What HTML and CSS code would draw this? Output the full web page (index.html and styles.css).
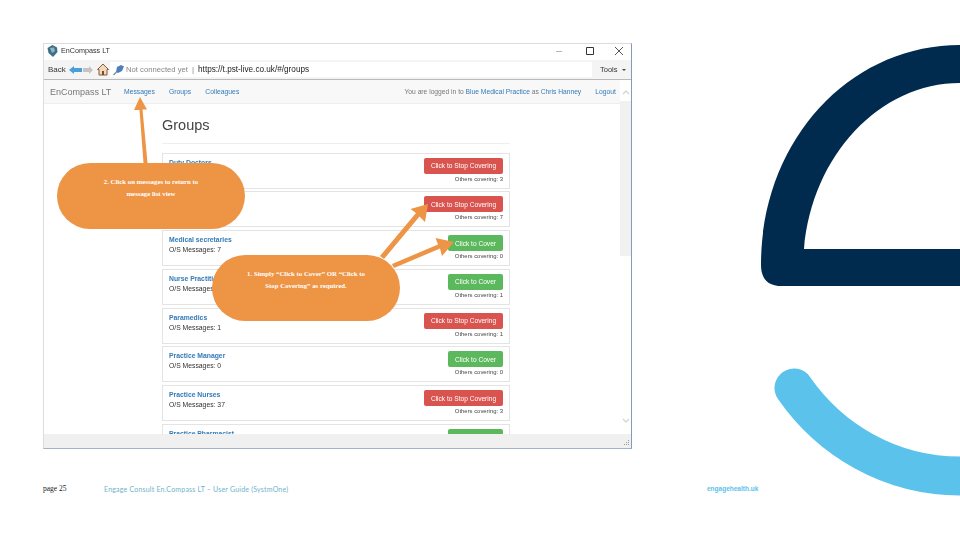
FILE: index.html
```html
<!DOCTYPE html>
<html lang="en">
<head>
    <meta charset="UTF-8">
    <meta name="viewport" content="width=device-width, initial-scale=1.0">
    <title>EnCompass LT - Groups</title>
    <link rel="stylesheet" href="styles.css">
</head>
<body>
    <div class="slide">
        <!-- brand shape on the right of the slide -->
        <svg class="brand" width="960" height="540" viewBox="0 0 960 540">
            <path fill="#002b4e" d="M960 45C850 45 761 140 761 265Q761 286 782 286H960V249H804C812 155 880 83 960 83Z"/>
            <path fill="none" stroke="#5bc2ec" stroke-width="39" stroke-linecap="round" d="M794 388C830 440 890 476 960 476"/>
        </svg>

        <div class="window">
            <div class="titlebar">
                <div class="app-name">
                    <svg width="11" height="12" viewBox="0 0 11 12"><path fill="#3f6f86" d="M5.500 0 10 2.500 10.500 7 6 12 1.500 8 .5 3Z"/><path fill="#8fb6c4" d="M3 3 7 2.500 8 6 5 8Z"/></svg>
                    <span>EnCompass LT</span>
                </div>
                <div class="win-controls">
                    <svg width="10" height="10" viewBox="0 0 10 10"><path stroke="#b5b5b5" d="M0 5.500H6"/></svg>
                    <svg width="10" height="10" viewBox="0 0 10 10"><path fill="none" stroke="#333" d="M1.500 1.500H8.500V8.500H1.500Z"/></svg>
                    <svg width="10" height="10" viewBox="0 0 10 10"><path stroke="#555" d="M1 1 9 9M9 1 1 9"/></svg>
                </div>
            </div>

            <div class="toolbar">
                <div class="nav-buttons">
                    <span class="back">Back</span>
                    <svg width="13" height="8" viewBox="0 0 13 8"><path fill="#4a9fd8" d="M0 4 5 0V2H13V6H5V8Z"/></svg>
                    <svg width="10" height="8" viewBox="0 0 10 8"><path fill="#c4c4c4" d="M10 4 6 0V2H0V6H6V8Z"/></svg>
                    <svg class="home" width="12" height="13" viewBox="0 0 12 13"><path fill="#efd9bd" stroke="#8a5a3a" d="M6 1 11.500 6.500H10V12H2V6.500H.5Z"/><path fill="#7a4a2a" d="M5 8H7V12H5Z"/></svg>
                </div>
                <div class="address">
                    <svg class="plug" width="12" height="12" viewBox="0 0 12 12"><path fill="#4f7fb8" d="M4 3 8 1 11 2.500 9 7 5 9 3 8Z"/><path stroke="#7c8ea5" stroke-width="1.500" d="M3.500 8 .5 11"/></svg>
                    <span class="status-text">Not connected yet</span>
                    <span class="sep">|</span>
                    <span class="url">https://t.pst-live.co.uk/#/groups</span>
                </div>
                <span class="tools">Tools <i class="caret"></i></span>
            </div>

            <div class="view">
                <div class="page">
                    <nav class="nav">
                        <span class="brand-name">EnCompass LT</span>
                        <a class="nav-link">Messages</a>
                        <a class="nav-link">Groups</a>
                        <a class="nav-link">Colleagues</a>
                        <span class="login-info">You are logged in to <a>Blue Medical Practice</a> as <a>Chris Hanney</a></span>
                        <a class="nav-link logout">Logout</a>
                    </nav>
                    <div class="content">
                        <h1>Groups</h1>
                        <div class="card">
                            <div><a class="group-name">Duty Doctors</a></div>
                            <div class="actions"><button class="btn stop">Click to Stop Covering</button><small>Others covering: 3</small></div>
                        </div>
                        <div class="card">
                            <div></div>
                            <div class="actions"><button class="btn stop">Click to Stop Covering</button><small>Others covering: 7</small></div>
                        </div>
                        <div class="card">
                            <div><a class="group-name">Medical secretaries</a><p>O/S Messages: 7</p></div>
                            <div class="actions"><button class="btn cover">Click to Cover</button><small>Others covering: 0</small></div>
                        </div>
                        <div class="card">
                            <div><a class="group-name">Nurse Practitioners</a><p>O/S Messages</p></div>
                            <div class="actions"><button class="btn cover">Click to Cover</button><small>Others covering: 1</small></div>
                        </div>
                        <div class="card">
                            <div><a class="group-name">Paramedics</a><p>O/S Messages: 1</p></div>
                            <div class="actions"><button class="btn stop">Click to Stop Covering</button><small>Others covering: 1</small></div>
                        </div>
                        <div class="card">
                            <div><a class="group-name">Practice Manager</a><p>O/S Messages: 0</p></div>
                            <div class="actions"><button class="btn cover">Click to Cover</button><small>Others covering: 0</small></div>
                        </div>
                        <div class="card">
                            <div><a class="group-name">Practice Nurses</a><p>O/S Messages: 37</p></div>
                            <div class="actions"><button class="btn stop">Click to Stop Covering</button><small>Others covering: 3</small></div>
                        </div>
                        <div class="card">
                            <div><a class="group-name">Practice Pharmacist</a></div>
                            <div class="actions"><button class="btn cover">Click to Cover</button></div>
                        </div>
                    </div>
                </div>
                <div class="scrollbar">
                    <svg width="8" height="6" viewBox="0 0 8 6"><path fill="none" stroke="#d4d4d4" stroke-width="1.300" d="M1 5 4 2 7 5"/></svg>
                    <div class="thumb"></div>
                    <svg class="down" width="8" height="6" viewBox="0 0 8 6"><path fill="none" stroke="#d4d4d4" stroke-width="1.300" d="M1 1 4 4 7 1"/></svg>
                </div>
            </div>
            <div class="statusbar">
                <svg width="7" height="7" viewBox="0 0 7 7"><path fill="#999" d="M5 0H6V1H5ZM3 2H4V3H3ZM5 2H6V3H5ZM1 4H2V5H1ZM3 4H4V5H3ZM5 4H6V5H5Z"/></svg>
            </div>
        </div>

        <div class="footer">
            <span class="page-no">page 25</span>
            <span class="doc-title">Engage Consult En.Compass LT – User Guide (SystmOne)</span>
            <span class="site">engagehealth.uk</span>
        </div>

        <!-- callouts drawn over the screenshot -->
        <svg class="arrows" width="960" height="540" viewBox="0 0 960 540">
            <path fill="#ed9445" d="M143.500 163 139.500 110H134L140 97 147 109.500H142.500L147.500 163Z"/>
            <path fill="#ed9445" d="M380 256 416 213 410.500 209 428 204 425 222 419.500 216.500 384 259Z"/>
            <path fill="#ed9445" d="M392 264 438 244.500 435.500 238 454 242 442 256 440 248.500 394 268Z"/>
        </svg>
        <div class="callout callout-messages">2. Click on messages to return to<br>message list view</div>
        <div class="callout callout-cover">1. Simply “Click to Cover” OR “Click to<br>Stop Covering” as required.</div>
    </div>
</body>
</html>
```

FILE: styles.css
```css
* {
    box-sizing: border-box;
}

body {
    margin: 0;
    background-color: #fff;
    font-family: "Liberation Sans", Arial, sans-serif;
}

.slide {
    position: relative;
    width: 960px;
    height: 540px;
    padding: 43px 0 0 43px;
    overflow: hidden;
}

.brand,
.arrows {
    position: absolute;
    left: 0;
    top: 0;
}

/* screenshot window */
.window {
    position: relative;
    width: 589px;
    height: 406px;
    display: flex;
    flex-direction: column;
    border: 1px solid #dcdcdc;
    border-right: 1px solid #7f9db9;
    border-bottom: 1px solid #9fb4c8;
    background-color: #fff;
    filter: blur(0.3px);
}

.titlebar {
    height: 16px;
    padding: 1px 7px 0 3px;
    display: flex;
    align-items: flex-start;
    justify-content: space-between;
    flex-shrink: 0;
}

.app-name {
    display: flex;
    align-items: center;
    gap: 3px;
    font-size: 7.200px;
    line-height: 12px;
    color: #333;
}

.win-controls {
    display: flex;
    gap: 19px;
    padding-top: 1px;
}

.toolbar {
    height: 20px;
    display: flex;
    padding: 2px 0;
    flex-shrink: 0;
    background-color: #f4f4f4;
    border-bottom: 1px solid #b9b9b9;
    font-size: 8px;
    color: #333;
}

.nav-buttons {
    width: 66px;
    flex-shrink: 0;
    display: flex;
    align-items: center;
    padding-left: 4px;
}

.back {
    margin-right: 3px;
}

.nav-buttons svg {
    margin-right: 1px;
}

.home {
    margin-left: 3px;
}

.address {
    flex: 1;
    display: flex;
    align-items: center;
    padding-left: 3px;
    background-color: #fff;
}

.status-text {
    font-size: 7.700px;
    color: #888;
    margin-left: 1px;
}

.sep {
    margin: 0 4px;
    color: #888;
}

.url {
    color: #222;
    font-size: 8.200px;
}

.tools {
    width: 39px;
    line-height: 15px;
    padding-left: 8px;
    font-size: 7.500px;
}

.caret {
    display: inline-block;
    margin: 0 0 1px 2px;
    border-left: 2px solid transparent;
    border-right: 2px solid transparent;
    border-top: 2px solid #444;
}

.view {
    flex: 1;
    display: flex;
    min-height: 0;
}

.page {
    flex: 1;
    min-width: 0;
    overflow: hidden;
}

.nav {
    height: 24px;
    display: flex;
    align-items: center;
    padding-left: 6px;
    background-color: #f8f8f8;
    border-bottom: 1px solid #eee;
    font-size: 6.800px;
    color: #777;
}

.brand-name {
    width: 74px;
    font-size: 9px;
    color: #777;
}

.nav-link {
    margin-right: 14px;
    color: #337ab7;
}

.login-info {
    margin-left: auto;
    margin-right: 14px;
    font-size: 6.700px;
}

.login-info a {
    color: #337ab7;
}

.logout {
    margin-right: 4px;
}

.content {
    padding-left: 118px;
    width: 466px;
}

h1 {
    margin: 0 0 9px;
    height: 39.500px;
    padding-top: 13px;
    border-bottom: 1px solid #eee;
    font-size: 14.500px;
    font-weight: normal;
    color: #444;
}

.card {
    height: 36px;
    margin-bottom: 2.800px;
    padding: 4px 6px 0 6px;
    display: flex;
    justify-content: space-between;
    border: 1px solid #e4e4e4;
    font-size: 7px;
    color: #333;
}

.group-name {
    display: block;
    font-size: 6.800px;
    line-height: 9px;
    font-weight: bold;
    color: #337ab7;
}

.card p {
    margin: 1px 0 0;
    font-size: 6.800px;
    line-height: 9px;
}

.actions {
    display: flex;
    flex-direction: column;
    align-items: flex-end;
}

.btn {
    height: 16px;
    width: 79px;
    padding: 0;
    border: none;
    border-radius: 2px;
    font-family: inherit;
    font-size: 6.600px;
    color: #fff;
}

.stop {
    background-color: #d9534f;
}

.cover {
    width: 55px;
    background-color: #5cb85c;
}

small {
    margin-top: 1px;
    font-size: 5.900px;
    line-height: 8px;
    color: #444;
}

.scrollbar {
    width: 11px;
    display: flex;
    flex-direction: column;
    align-items: center;
    padding-top: 9px;
    background-color: #fff;
}

.thumb {
    width: 100%;
    height: 155px;
    margin-top: 6px;
    background-color: #f1f1f1;
}

.down {
    margin-top: 162px;
}

.statusbar {
    height: 14px;
    flex-shrink: 0;
    display: flex;
    align-items: flex-end;
    justify-content: flex-end;
    padding: 0 1px 1px 0;
    background-color: #f0f0f0;
}

/* footer */
.footer {
    display: flex;
    align-items: center;
    height: 14px;
    margin-top: 32px;
    font-size: 7px;
}

.page-no {
    width: 61px;
    font-family: "Liberation Serif", serif;
    font-size: 7.500px;
    color: #222;
}

.doc-title {
    width: 603px;
    padding-top: 2px;
    font-family: Lato, sans-serif;
    letter-spacing: 0.200px;
    color: #6fb3cd;
}

.site {
    font-weight: bold;
    color: #5bc2ec;
    font-size: 6.500px;
}

/* orange callouts */
.callout {
    position: absolute;
    width: 188px;
    height: 66px;
    padding-top: 12.500px;
    border-radius: 33px;
    background-color: #ed9445;
    color: #fff;
    font-family: "Liberation Serif", serif;
    font-size: 6.800px;
    font-weight: bold;
    line-height: 12.500px;
    text-align: center;
}

.callout-messages {
    left: 57px;
    top: 163px;
}

.callout-cover {
    left: 212px;
    top: 255px;
}
```
